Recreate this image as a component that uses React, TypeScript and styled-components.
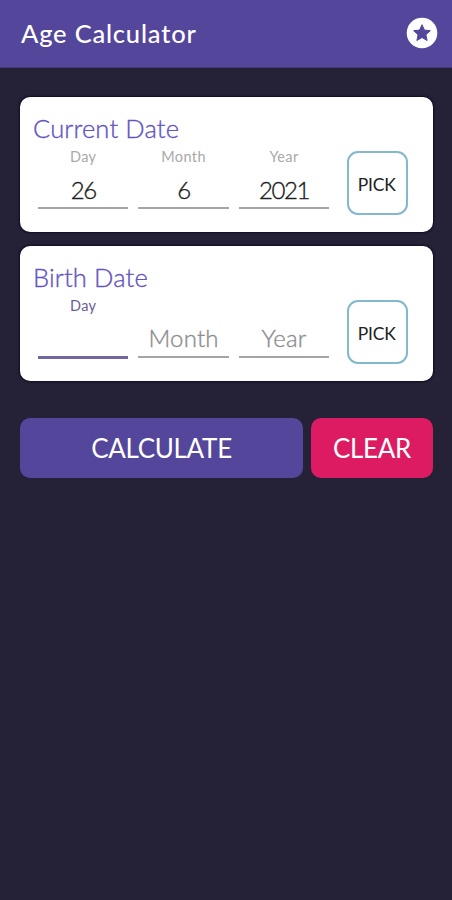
import React from 'react';
import styled, { createGlobalStyle } from 'styled-components';

const GlobalStyle = createGlobalStyle`
  * { box-sizing: border-box; }
  body { margin: 0; background: #252136; font-family: Lato, 'Open Sans', sans-serif; }
  button { font-family: inherit; padding: 0; margin: 0; }
`;

const Screen = styled.div`
  width: 452px;
  height: 900px;
  overflow: hidden;
  background: #252136;
`;

const AppBar = styled.header`
  display: flex;
  align-items: center;
  justify-content: space-between;
  height: 68px;
  padding: 0 14px 2px 21px;
  background: #54469b;
  border-bottom: 1px solid #43387d;
`;

const AppTitle = styled.h1`
  margin: 0;
  font-size: 25.5px;
  line-height: 32px;
  font-weight: 500;
  letter-spacing: 0.8px;
  color: #fff;
  white-space: nowrap;
`;

const StarButton = styled.button`
  width: 32px;
  height: 32px;
  border: 0;
  background: none;
  svg { display: block; }
`;

const Content = styled.main`
  display: flex;
  flex-direction: column;
  gap: 14px;
  padding: 29px 19px 0 20px;
`;

const Card = styled.section`
  height: 135px;
  padding: 17px 25.5px 0 13px;
  background: #fff;
  border-radius: 10px;
  box-shadow: 0 0 2px 1px #110c27;
`;

const CardTitle = styled.h2`
  margin: 0;
  font-size: 25.5px;
  line-height: 28px;
  font-weight: 300;
  letter-spacing: 0.15px;
  color: #6353c2;
  -webkit-text-stroke: 0.35px #6353c2;
  white-space: nowrap;
`;

const FieldRow = styled.div`
  display: flex;
  justify-content: space-between;
  padding: 1px 0 0 5px;
`;

const Fields = styled.div`
  display: grid;
  grid-template-columns: repeat(3, 90.4px);
  column-gap: 10px;
`;

const Field = styled.label<{ $active?: boolean }>`
  display: flex;
  flex-direction: column;
  align-items: center;
  height: ${(p) => (p.$active ? 67 : 66)}px;
  border-bottom: ${(p) => (p.$active ? '3px solid #73659f' : '2px solid #a5a5a5')};
`;

const FieldLabel = styled.span<{ $active?: boolean }>`
  height: 27px;
  padding-top: 5px;
  font-size: 14.5px;
  line-height: 18px;
  letter-spacing: 0.4px;
  color: ${(p) => (p.$active ? '#6a5d99' : '#a9a9a9')};
`;

const FieldValue = styled.span<{ $placeholder?: boolean }>`
  font-size: 24px;
  line-height: 28px;
  padding-top: ${(p) => (p.$placeholder ? 5 : 6)}px;
  font-weight: 300;
  letter-spacing: ${(p) => (p.$placeholder ? 0.2 : -1.4)}px;
  color: ${(p) => (p.$placeholder ? '#8c8c8c' : '#202020')};
  -webkit-text-stroke: 0.35px currentColor;
`;

const PickButton = styled.button`
  width: 60.5px;
  height: 64px;
  margin-top: 8px;
  border: 2px solid #83b8cf;
  border-radius: 11px;
  background: #fff;
  font-size: 17.5px;
  letter-spacing: -0.2px;
  padding: 2px 1px 0 0;
  color: #222;
`;

const Actions = styled.div`
  display: grid;
  grid-template-columns: 283px 122px;
  gap: 8px;
  margin-top: 22.5px;
`;

const ActionButton = styled.button<{ $tone: string }>`
  height: 60.5px;
  border: 0;
  border-radius: 10px;
  background: ${(p) => p.$tone};
  color: #fff;
  font-size: 26px;
  font-weight: 400;
  letter-spacing: -0.3px;
`;

type DateField = { label: string; value?: string; active?: boolean };

function DateCard({ title, fields }: { title: string; fields: DateField[] }) {
  return (
    <Card>
      <CardTitle>{title}</CardTitle>
      <FieldRow>
        <Fields>
          {fields.map(({ label, value, active }) => (
            <Field key={label} $active={active}>
              <FieldLabel $active={active}>{value || active ? label : ''}</FieldLabel>
              {!active && <FieldValue $placeholder={!value}>{value || label}</FieldValue>}
            </Field>
          ))}
        </Fields>
        <PickButton>PICK</PickButton>
      </FieldRow>
    </Card>
  );
}

export default function App() {
  return (
    <>
      <GlobalStyle />
      <Screen>
        <AppBar>
          <AppTitle>Age Calculator</AppTitle>
          <StarButton aria-label="Rate">
            <svg width="32" height="32" viewBox="0 0 32 32">
              <circle cx="16" cy="16" r="15.3" fill="#fff" />
              <path
                d="M16 7.7l2.4 5.4 5.9.6-4.4 4 1.2 5.8-5.1-3-5.1 3 1.2-5.8-4.4-4 5.9-.6z"
                fill="#54469b"
                stroke="#54469b"
                strokeWidth="1"
                strokeLinejoin="round"
              />
            </svg>
          </StarButton>
        </AppBar>
        <Content>
          <DateCard
            title="Current Date"
            fields={[
              { label: 'Day', value: '26' },
              { label: 'Month', value: '6' },
              { label: 'Year', value: '2021' },
            ]}
          />
          <DateCard
            title="Birth Date"
            fields={[{ label: 'Day', active: true }, { label: 'Month' }, { label: 'Year' }]}
          />
          <Actions>
            <ActionButton $tone="#54469b">CALCULATE</ActionButton>
            <ActionButton $tone="#dc1b62">CLEAR</ActionButton>
          </Actions>
        </Content>
      </Screen>
    </>
  );
}
